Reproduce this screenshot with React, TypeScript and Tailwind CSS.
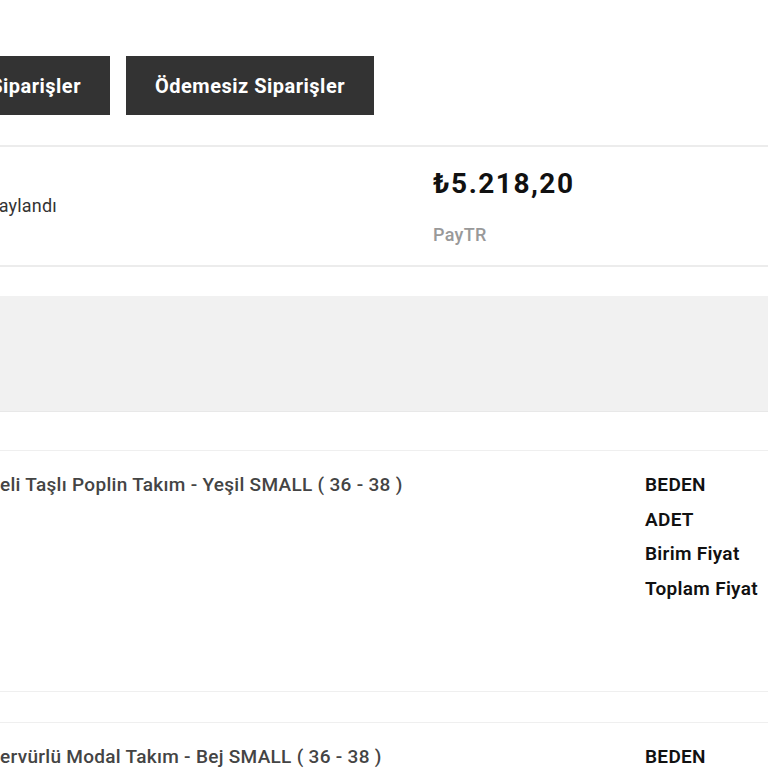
import React from "react";

type Product = {
  name: string;
};

const products: Product[] = [
  { name: "eli Taşlı Poplin Takım - Yeşil SMALL ( 36 - 38 )" },
  { name: "ervürlü Modal Takım - Bej SMALL ( 36 - 38 )" },
];

const labels = ["BEDEN", "ADET", "Birim Fiyat", "Toplam Fiyat"];

const ProductRow: React.FC<{ product: Product; last?: boolean }> = ({ product, last }) => {
  return (
    <div className={`flex items-start border-t border-[#efefef] ${last ? "" : "border-b h-[242px]"}`}>
      <div className="w-[645px] pt-[22px]">
        <p className="whitespace-nowrap text-[19px] leading-[24px] tracking-[0.3px] font-medium text-[#444]">
          {product.name}
        </p>
      </div>
      <div className="flex flex-col gap-[10.7px] pt-[22px]">
        {labels.map((label) => (
          <p key={label} className="whitespace-nowrap text-[19px] leading-[24px] tracking-[0.3px] font-semibold text-[#111]">
            {label}
          </p>
        ))}
      </div>
    </div>
  );
};

export default function App() {
  return (
    <div
      className="w-[768px] h-[768px] overflow-hidden bg-white"
      style={{ fontFamily: "Roboto, 'Noto Sans', sans-serif" }}
    >
      <div className="flex gap-[16px] pt-[56px]">
        <div className="w-[110px] flex justify-end">
          <button className="h-[59px] px-[29px] bg-[#333333] text-white text-[20px] tracking-[0.5px] font-bold whitespace-nowrap">
            Ödemeli Siparişler
          </button>
        </div>
        <button className="h-[59px] w-[248px] bg-[#333333] text-white text-[20px] tracking-[0.5px] font-bold whitespace-nowrap">
          Ödemesiz Siparişler
        </button>
      </div>

      <div className="mt-[30px] flex h-[122px] border-y-2 border-[#ececec]">
        <div className="w-[433px] flex items-center">
          <div className="w-[57px] flex justify-end pb-[2px]">
            <span className="whitespace-nowrap text-[18px] tracking-[0.2px] text-[#333]">Onaylandı</span>
          </div>
        </div>
        <div className="flex flex-col pt-[20px]">
          <span className="text-[28px] leading-[34px] tracking-[1.5px] font-bold text-[#111]">₺5.218,20</span>
          <span className="mt-[23px] text-[18px] leading-[22px] tracking-[0.3px] font-medium text-[#999]">PayTR</span>
        </div>
      </div>

      <div className="mt-[29px] h-[116px] bg-[#f1f1f1] border-b border-[#e8e8e8]" />

      <div className="mt-[38px]">
        <ProductRow product={products[0]} />
        <div className="h-[30px]" />
        <ProductRow product={products[1]} last />
      </div>
    </div>
  );
}
